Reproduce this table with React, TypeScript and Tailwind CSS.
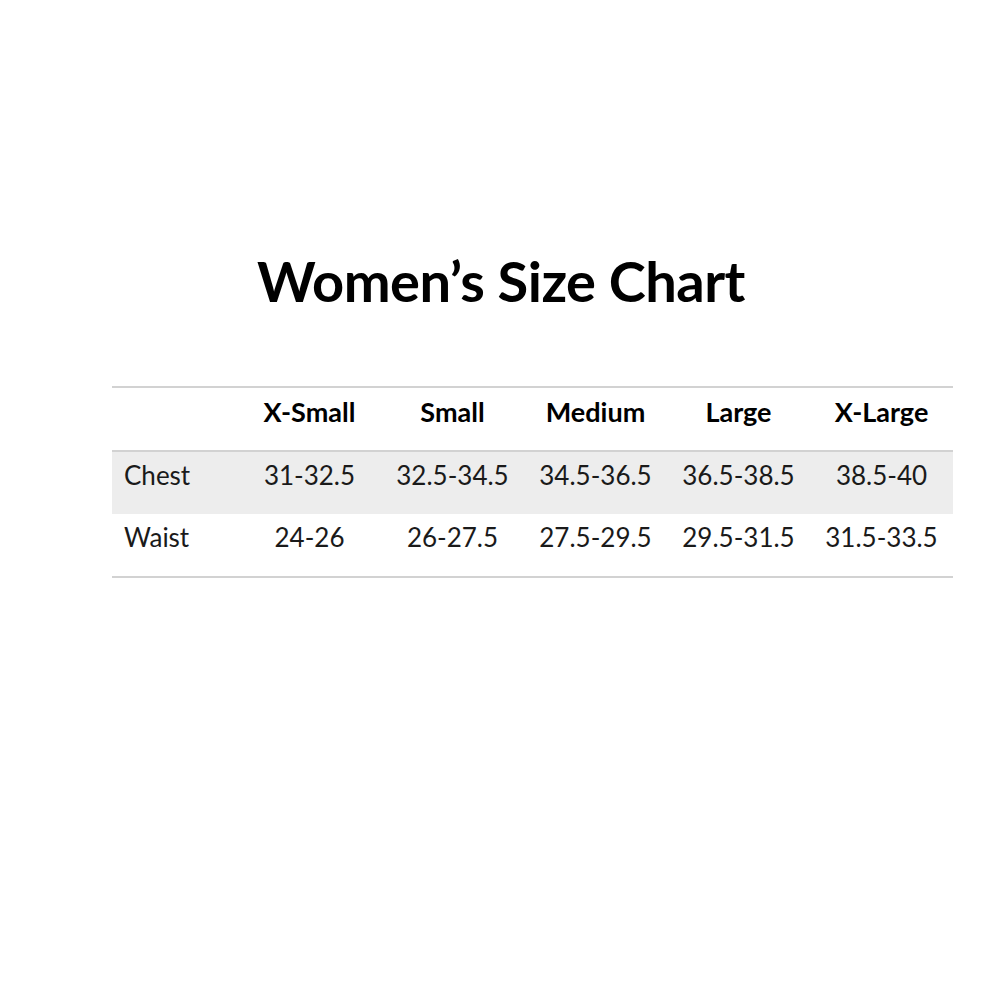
import React from 'react';

const sizes = ['X-Small', 'Small', 'Medium', 'Large', 'X-Large'];

const rows = [
  { label: 'Chest', values: ['31-32.5', '32.5-34.5', '34.5-36.5', '36.5-38.5', '38.5-40'], shaded: true },
  { label: 'Waist', values: ['24-26', '26-27.5', '27.5-29.5', '29.5-31.5', '31.5-33.5'], shaded: false },
];

const App: React.FC = () => {
  return (
    <div className="w-[1000px] h-[1000px] bg-white text-black font-['Lato','Liberation_Sans',sans-serif]">
      <h1 className="pt-[251px] pl-[2px] text-center text-[56px] leading-[60px] font-bold tracking-[-0.5px]">
        Women’s Size Chart
      </h1>

      <div className="mt-[75px] ml-[112px] w-[841px] border-t-2 border-b-2 border-[#d2d2d2]">
        <div className="grid grid-cols-[126px_repeat(5,143px)] h-[64px] border-b-2 border-[#d2d2d2] text-[27px] font-bold">
          <div />
          {sizes.map((s) => (
            <div key={s} className="flex items-center justify-center pb-[14px]">
              {s}
            </div>
          ))}
        </div>

        {rows.map((row) => (
          <div
            key={row.label}
            className={`grid grid-cols-[126px_repeat(5,143px)] h-[62px] text-[26px] text-[#1a1a1a] ${
              row.shaded ? 'bg-[#ededed]' : 'bg-white'
            }`}
          >
            <div className="flex items-center pl-[12px] pb-[15px]">{row.label}</div>
            {row.values.map((v) => (
              <div key={v} className="flex items-center justify-center pb-[15px]">
                {v}
              </div>
            ))}
          </div>
        ))}
      </div>
    </div>
  );
};

export default App;
